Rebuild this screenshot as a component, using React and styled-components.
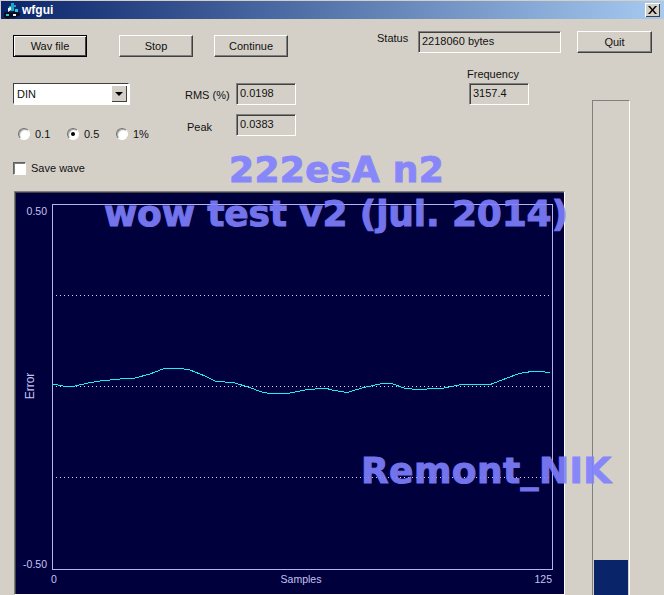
import styled, { createGlobalStyle } from "styled-components";

const GlobalStyle = createGlobalStyle`
  html, body {
    margin: 0;
    padding: 0;
    overflow: hidden;
    background: #d4d0c8;
  }
`;

const wave =
  "52,384 58,385 65,386.3 75,386 90,382.6 100,381 120,379 135,378 150,374 163,369 180,368.3 190,370 205,376 215,381 235,383 248,387 262,392 272,394 290,393 305,390 325,388 332,390 347,392.5 362,388 382,383.5 392,383.5 405,388.5 419,389.5 444,388 462,384.5 489,385 502,380 519,373.5 535,371 550,372.5";

const App = () => {
  return (
    <Window>
      <GlobalStyle />
      <TitleBar>
        <TitleIcon />
        <TitleText>wfgui</TitleText>
        <CloseButton>
          <svg width="9" height="8" viewBox="0 0 9 8">
            <path d="M0 0h2l2.5 3L7 0h2L5.5 4 9 8H7L4.5 5 2 8H0l3.5-4z" fill="#000" />
          </svg>
        </CloseButton>
      </TitleBar>
      <Body>
        <MainColumn>
          <Controls>
            <LeftControls>
              <ButtonRow>
                <Button $default>Wav file</Button>
                <Button>Stop</Button>
                <Button>Continue</Button>
              </ButtonRow>
              <OptionsRow>
                <Options>
                  <Select>
                    <span>DIN</span>
                    <SelectArrow />
                  </Select>
                  <RadioRow>
                    <RadioItem><Radio /><span>0.1</span></RadioItem>
                    <RadioItem><Radio $checked /><span>0.5</span></RadioItem>
                    <RadioItem><Radio /><span>1%</span></RadioItem>
                  </RadioRow>
                  <CheckRow>
                    <CheckBox />
                    <span>Save wave</span>
                  </CheckRow>
                </Options>
                <Readouts>
                  <ReadoutLabel>RMS (%)</ReadoutLabel>
                  <Field $width={60}>0.0198</Field>
                  <ReadoutLabel $indent={2} $drop={6}>Peak</ReadoutLabel>
                  <Field $width={60}>0.0383</Field>
                </Readouts>
              </OptionsRow>
            </LeftControls>
            <RightControls>
              <StatusRow>
                <StatusLabel>Status</StatusLabel>
                <Field $width={143}>2218060 bytes</Field>
              </StatusRow>
              <FrequencyBlock>
                <FrequencyLabel>Frequency</FrequencyLabel>
                <Field $width={60}>3157.4</Field>
              </FrequencyBlock>
            </RightControls>
          </Controls>
          <Scope>
            <svg width="549" height="403" viewBox="15 192 549 403">
              <rect x="52.5" y="204.5" width="500" height="365" fill="none" stroke="#b4b4f0" />
              <PlotGrid x1="56" x2="550" y1="295.5" y2="295.5" />
              <PlotGrid x1="56" x2="550" y1="386.5" y2="386.5" />
              <PlotGrid x1="56" x2="550" y1="477.5" y2="477.5" />
              <polyline points={wave} fill="none" stroke="#19f0f0" strokeWidth="1" shapeRendering="crispEdges" />
              <PlotText x="47" y="215" textAnchor="end">0.50</PlotText>
              <PlotText x="47" y="568" textAnchor="end">-0.50</PlotText>
              <PlotText x="51" y="583">0</PlotText>
              <PlotText x="301" y="583" textAnchor="middle">Samples</PlotText>
              <PlotText x="552" y="583" textAnchor="end">125</PlotText>
              <AxisTitle x="34" y="386" textAnchor="middle" transform="rotate(-90 34 386)">Error</AxisTitle>
            </svg>
          </Scope>
        </MainColumn>
        <SideColumn>
          <Button $wide>Quit</Button>
          <Meter>
            <MeterFill $level={35} />
          </Meter>
        </SideColumn>
      </Body>
      <Stamp $top={148} $left={229} $spacing={0.35}>222esA n2</Stamp>
      <Stamp $top={192} $left={104} $spacing={-0.15}>wow test v2 (jul. 2014)</Stamp>
      <Stamp $top={449} $left={361} $spacing={0.4}>Remont_NIK</Stamp>
    </Window>
  );
};

const TitleIcon = () => (
  <svg width="17" height="17" viewBox="0 0 17 17">
    <path d="M0 11l5-2 2 2 3-2 6 2v2l-6 3-3-1-3 2-4-2z" fill="#0c0c18" />
    <path d="M7 1h3v2h2v2h-2v4H7V6H5V4h2z" fill="#18a8c8" />
    <path d="M4 6l3-1v3L4 10z" fill="#e8f4ff" />
    <rect x="11" y="7" width="3" height="3" fill="#22c8e0" />
    <rect x="2" y="12" width="3" height="2" fill="#22c8e0" />
    <rect x="9" y="12" width="3" height="2" fill="#e8f4ff" />
  </svg>
);

const Window = styled.div`
  position: relative;
  width: 664px;
  height: 595px;
  box-sizing: border-box;
  padding: 1px 0 0 1px;
  overflow: hidden;
  display: flex;
  flex-direction: column;
  background: #d4d0c8;
  font-family: "Liberation Sans", Arial, sans-serif;
  font-size: 11px;
  line-height: 14px;
  color: #111;
`;

const TitleBar = styled.div`
  height: 18px;
  flex: none;
  display: flex;
  align-items: center;
  gap: 1px;
  padding: 0 4px 0 3px;
  background: linear-gradient(90deg, #0a246a, #a6caf0);
`;

const TitleText = styled.span`
  flex: 1;
  color: #fff;
  font-weight: 700;
  font-size: 12px;
`;

const CloseButton = styled.div`
  width: 15px;
  height: 14px;
  display: flex;
  align-items: center;
  justify-content: center;
  background: #d4d0c8;
  box-shadow: inset 1px 1px 0 #fff, inset -1px -1px 0 #404040;
`;

const Body = styled.div`
  flex: 1;
  min-height: 0;
  display: flex;
`;

const MainColumn = styled.div`
  width: 564px;
  flex: none;
  display: flex;
  flex-direction: column;
`;

const Controls = styled.div`
  height: 172px;
  flex: none;
  box-sizing: border-box;
  padding-left: 12px;
  display: flex;
`;

const LeftControls = styled.div`
  width: 364px;
  flex: none;
  padding-top: 16px;
`;

const ButtonRow = styled.div`
  display: flex;
  gap: 32px;

  & > :nth-child(3) {
    margin-left: -11px;
  }
`;

const Button = styled.div`
  width: ${(p) => (p.$wide ? 75 : 74)}px;
  height: 22px;
  box-sizing: border-box;
  display: flex;
  align-items: center;
  justify-content: center;
  background: #d4d0c8;
  border: 1px solid;
  border-color: #fff #404040 #404040 #fff;
  box-shadow: inset -1px -1px 0 #808080;
  ${(p) =>
    p.$default &&
    `
    border-color: #000;
    box-shadow: inset 1px 1px 0 #fff, inset -1px -1px 0 #404040;
  `}
`;

const OptionsRow = styled.div`
  display: flex;
  margin-top: 26px;
`;

const Options = styled.div`
  width: 172px;
  flex: none;
  display: flex;
  flex-direction: column;
`;

const Select = styled.div`
  width: 116px;
  height: 21px;
  box-sizing: border-box;
  display: flex;
  align-items: center;
  justify-content: space-between;
  padding: 0 1px 0 3px;
  background: #fff;
  border: 1px solid;
  border-color: #404040 #fff #fff #404040;
  box-shadow: 1px 1px 0 #fff;
`;

const SelectArrow = styled.div`
  width: 16px;
  height: 17px;
  box-sizing: border-box;
  display: flex;
  align-items: center;
  justify-content: center;
  background: #d4d0c8;
  box-shadow: inset 1px 1px 0 #fff, inset -1px -1px 0 #404040;

  &::after {
    content: "";
    border: 4px solid transparent;
    border-top-color: #000;
    border-bottom: 0;
  }
`;

const RadioRow = styled.div`
  display: flex;
  margin: 23px 0 0 5px;
`;

const RadioItem = styled.div`
  width: 49px;
  display: flex;
  align-items: center;
  gap: 5px;
`;

const Radio = styled.div`
  width: 12px;
  height: 12px;
  box-sizing: border-box;
  flex: none;
  border-radius: 50%;
  display: flex;
  align-items: center;
  justify-content: center;
  background: #fff;
  border: 1px solid;
  border-color: #707070 #fff #fff #707070;
  box-shadow: inset 1px 1px 1px #a0a0a0;

  &::after {
    content: "";
    width: 4px;
    height: 4px;
    border-radius: 50%;
    background: ${(p) => (p.$checked ? "#000" : "transparent")};
  }
`;

const CheckRow = styled.div`
  display: flex;
  align-items: center;
  gap: 5px;
  margin-top: 20px;
`;

const CheckBox = styled.div`
  width: 13px;
  height: 13px;
  box-sizing: border-box;
  flex: none;
  background: #fff;
  border: 1px solid;
  border-color: #606060 #fff #fff #606060;
  box-shadow: inset 1px 1px 0 #808080;
`;

const Readouts = styled.div`
  display: grid;
  grid-template-columns: 51px 60px;
  grid-auto-rows: 22px;
  row-gap: 9px;
  align-content: start;
`;

const ReadoutLabel = styled.div`
  padding-left: ${(p) => p.$indent || 0}px;
  padding-top: ${(p) => p.$drop || 5}px;
`;

const Field = styled.div`
  width: ${(p) => p.$width}px;
  height: 22px;
  box-sizing: border-box;
  padding: 2px 0 0 3px;
  border: 1px solid;
  border-color: #808080 #fff #fff #808080;
  box-shadow: inset 1px 1px 0 #404040;
`;

const RightControls = styled.div`
  padding-top: 12px;
`;

const StatusRow = styled.div`
  display: flex;
  gap: 10px;
`;

const StatusLabel = styled.div`
  width: 31px;
`;

const FrequencyBlock = styled.div`
  margin: 14px 0 0 92px;
`;

const FrequencyLabel = styled.div`
  height: 16px;
  margin-left: -2px;
`;

const Scope = styled.div`
  flex: 1;
  min-height: 0;
  margin-left: 13px;
  box-sizing: border-box;
  overflow: hidden;
  background: #00003c;
  border: 1px solid;
  border-color: #808080 #fff #fff #808080;
  box-shadow: inset 1px 1px 0 #404040;
  width: 551px;
`;

const PlotGrid = styled.line`
  stroke: #d8d8f4;
  stroke-width: 1;
  stroke-dasharray: 1 3;
`;

const PlotText = styled.text`
  fill: #c4c4f2;
  font-family: "Liberation Sans", Arial, sans-serif;
  font-size: 10.5px;
`;

const AxisTitle = styled(PlotText)`
  font-size: 12px;
`;

const SideColumn = styled.div`
  flex: 1;
  display: flex;
  flex-direction: column;
  padding: 12px 0 0 12px;
`;

const Meter = styled.div`
  flex: 1;
  width: 38px;
  box-sizing: border-box;
  margin: 47px 0 0 15px;
  padding: 0 1px;
  display: flex;
  flex-direction: column;
  justify-content: flex-end;
  border: 1px solid;
  border-color: #808080 #fff #fff #808080;
  border-bottom: 0;
`;

const MeterFill = styled.div`
  height: ${(p) => p.$level}px;
  background: #0a246a;
`;

const Stamp = styled.div`
  position: absolute;
  top: ${(p) => p.$top}px;
  left: ${(p) => p.$left}px;
  font-family: "DejaVu Sans", Verdana, sans-serif;
  font-weight: 700;
  font-size: 36px;
  line-height: 43px;
  letter-spacing: ${(p) => p.$spacing}px;
  white-space: nowrap;
  color: #8080ff;
  opacity: 0.9;
  -webkit-text-stroke: 1px #8080ff;
`;

export default App;
